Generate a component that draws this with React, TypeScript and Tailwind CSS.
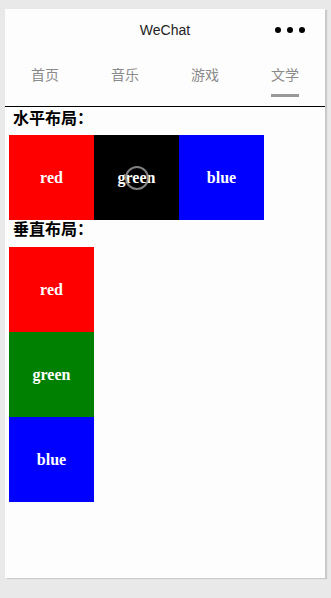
import React from "react";

const serif = { fontFamily: '"Liberation Serif", "Noto Sans CJK SC", serif' };

function Box({ color, label, ring }: { color: string; label: string; ring?: boolean }) {
  return (
    <div
      className={`relative w-[85px] h-[85px] flex items-center justify-center text-white font-bold text-[16px] ${color}`}
      style={serif}
    >
      {label}
      {ring && (
        <div className="absolute left-1/2 top-1/2 w-[24px] h-[24px] -translate-x-1/2 -translate-y-1/2 rounded-full border-2 border-[rgba(150,150,150,0.85)]" />
      )}
    </div>
  );
}

export default function App() {
  const tabs = ["首页", "音乐", "游戏", "文学"];
  return (
    <div className="w-[331px] h-[598px] bg-[#e9e9e9] pt-[9px] pl-[5px]">
      <div className="w-[320px] h-[569px] bg-[#fdfdfd] shadow-[2px_1px_1px_rgba(0,0,0,0.13)] flex flex-col">
        <div className="relative h-[42px] flex items-center justify-center text-[14px] text-[#222]" style={{ fontFamily: '"Liberation Sans", Arial, sans-serif' }}>
          WeChat
          <div className="absolute right-[20px] top-1/2 -translate-y-1/2 flex gap-[6px]">
            <span className="w-[6px] h-[6px] rounded-full bg-black" />
            <span className="w-[6px] h-[6px] rounded-full bg-black" />
            <span className="w-[6px] h-[6px] rounded-full bg-black" />
          </div>
        </div>
        <div className="h-[56px] border-b border-black flex">
          {tabs.map((t, i) => (
            <div key={t} className="w-[80px] flex flex-col items-center pt-[13px]">
              <span className="text-[14px] leading-[20px] text-[#8a8a8a]" style={{ fontFamily: '"Noto Sans CJK SC", sans-serif' }}>{t}</span>
              {i === 3 && <span className="mt-[10px] w-[28px] h-[3px] bg-[#999]" />}
            </div>
          ))}
        </div>
        <div className="pl-[4px]">
          <div className="h-[28px] pl-[4px] pt-[1px] leading-[22px] text-[16px] font-bold text-black" style={serif}>水平布局：</div>
          <div className="flex">
            <Box color="bg-[#ff0000]" label="red" />
            <Box color="bg-black" label="green" ring />
            <Box color="bg-[#0000ff]" label="blue" />
          </div>
          <div className="h-[27px] pl-[4px] leading-[20px] text-[16px] font-bold text-black" style={serif}>垂直布局：</div>
          <div className="flex flex-col">
            <Box color="bg-[#ff0000]" label="red" />
            <Box color="bg-[#008000]" label="green" />
            <Box color="bg-[#0000ff]" label="blue" />
          </div>
        </div>
      </div>
    </div>
  );
}
